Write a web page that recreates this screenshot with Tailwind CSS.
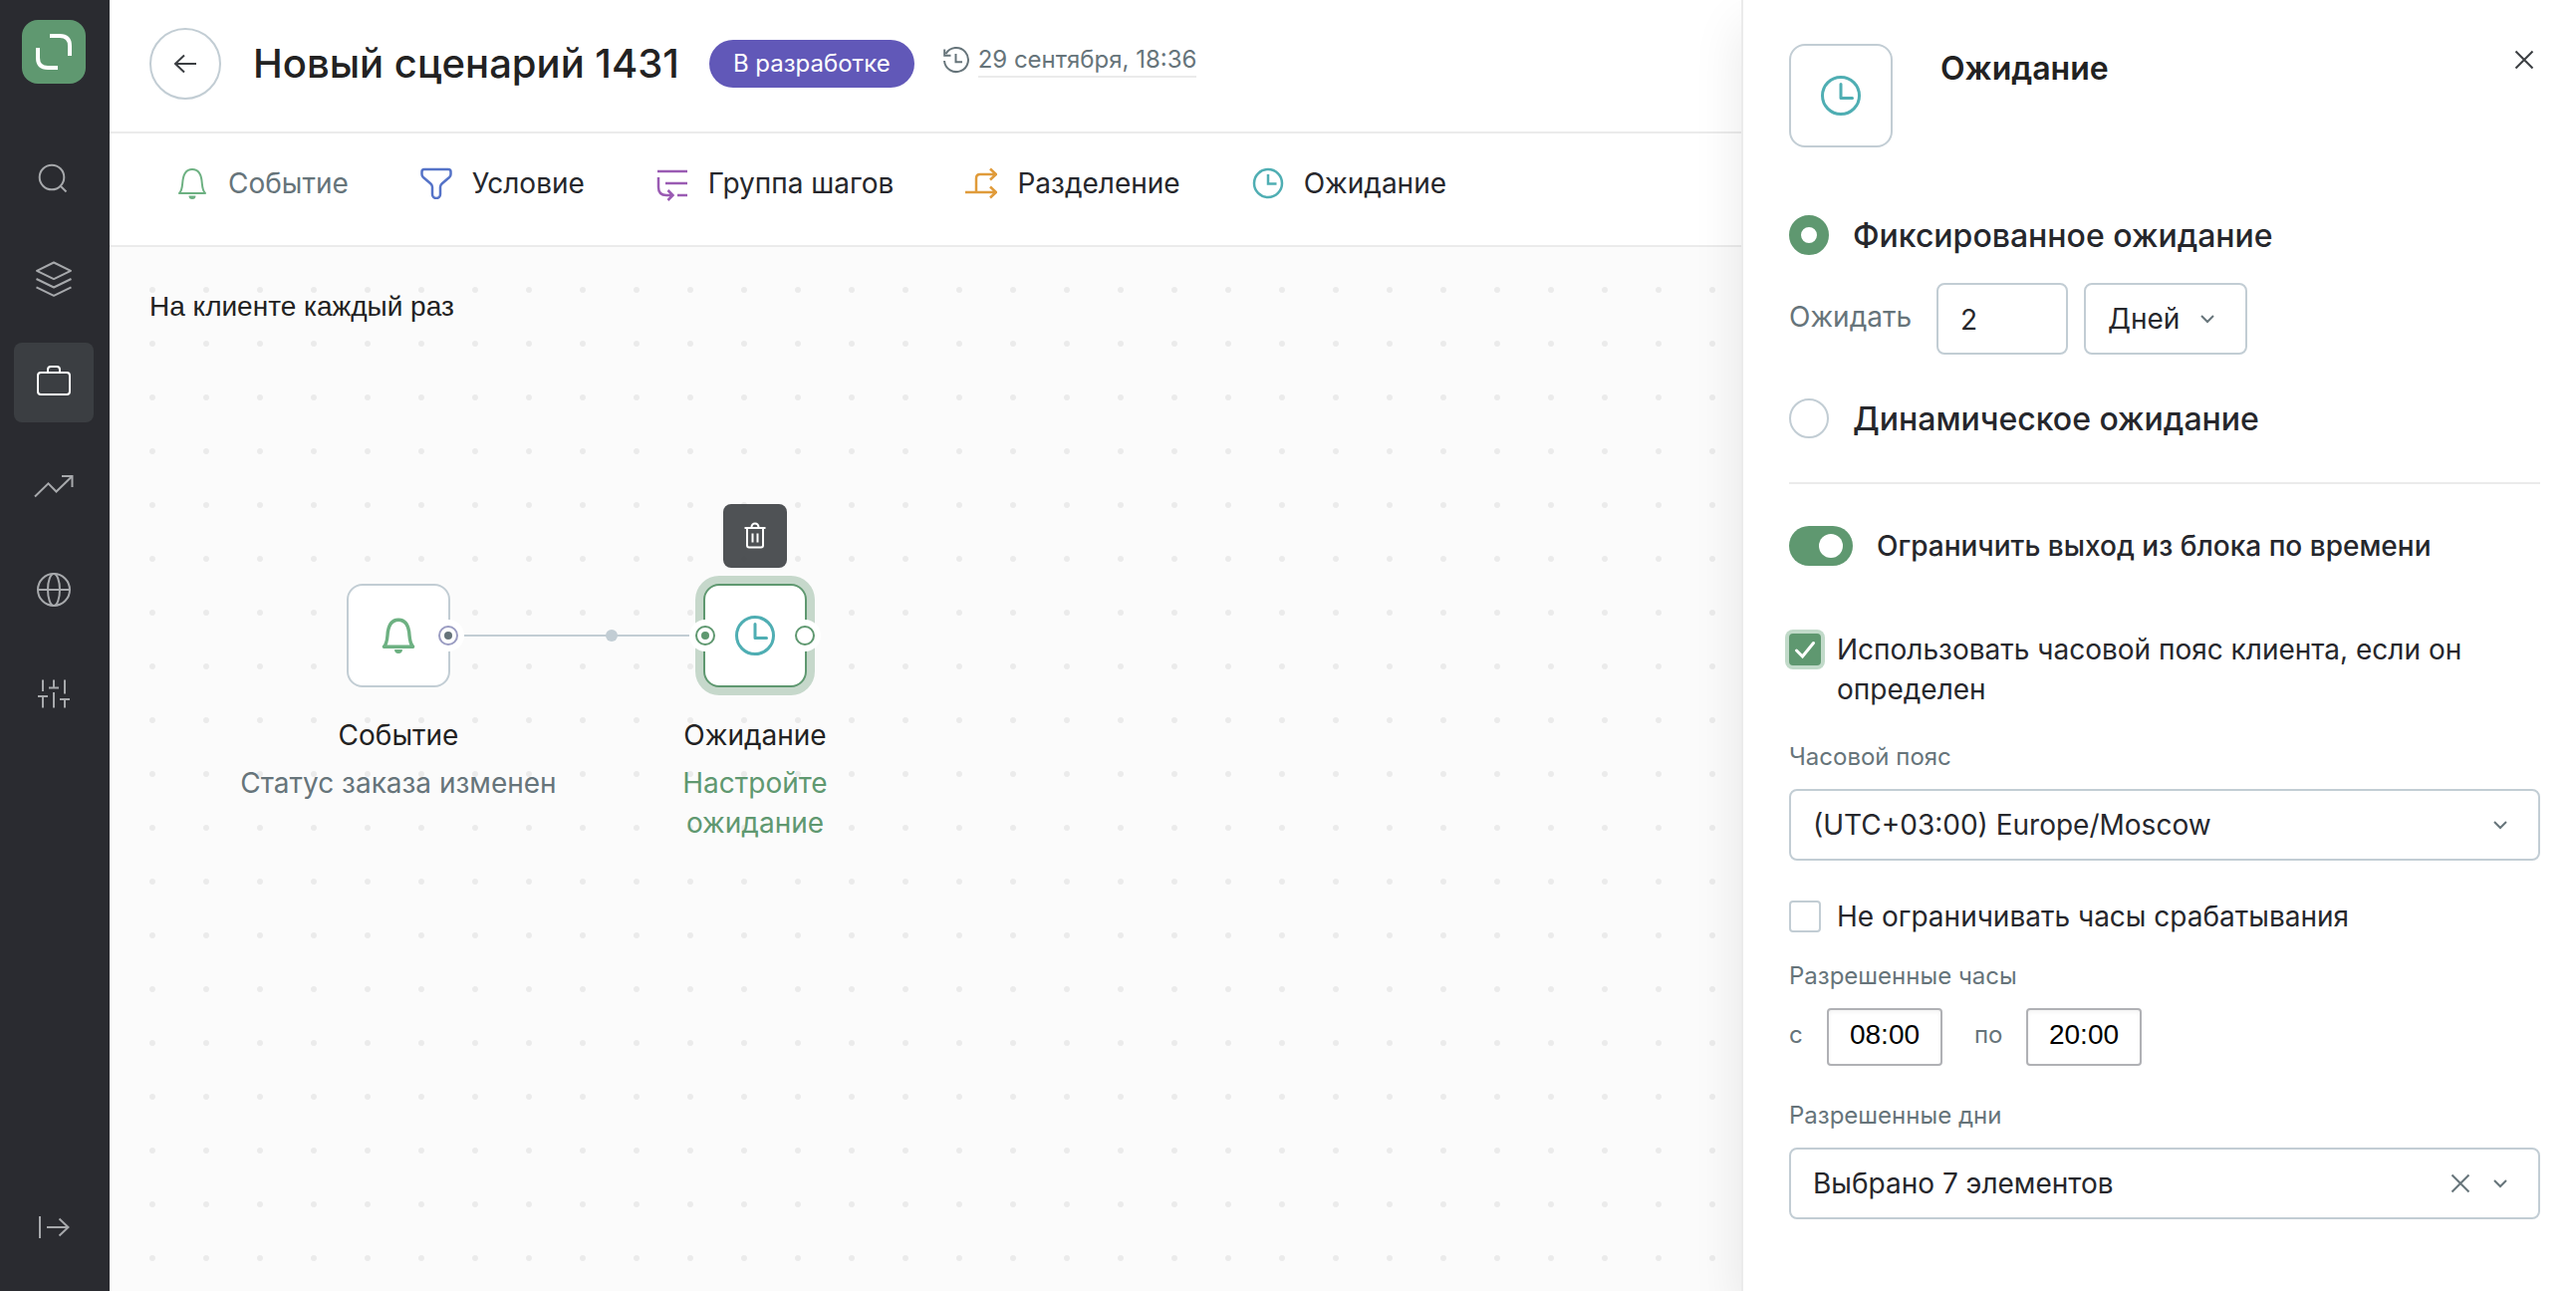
<!DOCTYPE html>
<html lang="ru">
<head>
<meta charset="utf-8">
<meta name="viewport" content="width=device-width, initial-scale=1">
<title>Новый сценарий 1431</title>
<script src="https://cdn.jsdelivr.net/npm/@tailwindcss/browser@4"></script>
</head>
<body class="bg-white font-['Inter',sans-serif] text-[28px] leading-10 text-[#26272c]">
<svg class="hidden" aria-hidden="true">
  <symbol id="bell" viewBox="0 0 32 32"><path d="M3 26h26c-2-2-2.800-5-3.200-10C25.200 6 22 2 16 2S6.800 6 6.200 16C5.800 21 5 24 3 26z" fill="none" stroke="currentColor" stroke-linejoin="round"/><path d="M12.500 28.500h7a3.500 3.500 0 0 1-7 0z" fill="currentColor"/></symbol>
  <symbol id="clock" viewBox="0 0 40 40"><circle cx="20" cy="20" r="18.500"/><path d="M20 8.500v14h11.500" stroke-linecap="round" stroke-linejoin="round"/></symbol>
  <symbol id="chevron" viewBox="0 0 16 16"><path d="M2 5l6 6 6-6" fill="none" stroke="currentColor" stroke-width="2"/></symbol>
  <symbol id="cross" viewBox="0 0 20 20"><path d="M1.500 1.500l17 17M18.500 1.500l-17 17" fill="none" stroke="currentColor" stroke-width="2"/></symbol>
</svg>
<div class="flex min-h-screen">

  <nav aria-label="Главное меню" class="flex w-[110px] shrink-0 flex-col bg-[#2a2b30] pt-5 pr-4 pb-6 pl-[14px] text-[#a7a9ac]">
    <a href="#" aria-label="Главная" class="mx-auto mb-[52px] block size-16 rounded-2xl bg-[#5f9870]">
      <svg class="size-16" viewBox="0 0 64 64" fill="none" stroke="#fff" stroke-width="4"><path d="M28 16h10q10 0 10 10v10M16 28v10q0 10 10 10h10"/></svg>
    </a>
    <div class="flex flex-col gap-6">
      <a href="#" aria-label="Поиск" class="flex size-20 items-center justify-center rounded-lg">
        <svg class="size-10" viewBox="0 0 40 40" fill="none" stroke="currentColor" stroke-width="2"><circle cx="18" cy="22" r="12.300"/><path d="M27 31l5.500 5.500"/></svg>
      </a>
      <a href="#" aria-label="Слои" class="flex size-20 items-center justify-center rounded-lg">
        <svg class="size-10" viewBox="0 0 40 40" fill="none" stroke="currentColor" stroke-width="2" stroke-linejoin="round"><path d="M20 3.500l17 8.300-17 8.300-17-8.300zM2.500 20L20 28.500 37.500 20M2.500 28.300L20 36.800l17.500-8.500"/></svg>
      </a>
      <a href="#" aria-label="Кампании" aria-current="page" class="flex size-20 items-center justify-center rounded-lg bg-[#3b3e42] text-white">
        <svg class="size-10" viewBox="0 0 40 40" fill="none" stroke="currentColor" stroke-width="2"><rect x="4" y="10" width="32" height="22" rx="3"/><path d="M14 10V7a3 3 0 0 1 3-3h6a3 3 0 0 1 3 3v3"/></svg>
      </a>
      <a href="#" aria-label="Отчёты" class="flex size-20 items-center justify-center rounded-lg">
        <svg class="size-10" viewBox="0 0 40 40" fill="none" stroke="currentColor" stroke-width="2"><path d="M1 30.500l13.500-13.200 8 8.200L38.500 10M28 10h10.500v11"/></svg>
      </a>
      <a href="#" aria-label="Интеграции" class="flex size-20 items-center justify-center rounded-lg">
        <svg class="size-10" viewBox="0 0 40 40" fill="none" stroke="currentColor" stroke-width="2"><circle cx="20" cy="20" r="16"/><ellipse cx="20" cy="20" rx="6" ry="16"/><path d="M4 20h32"/></svg>
      </a>
      <a href="#" aria-label="Настройки" class="flex size-20 items-center justify-center rounded-lg">
        <svg class="size-10" viewBox="0 0 40 40" fill="none" stroke="currentColor" stroke-width="2"><path d="M9 6.500V18M4 23h10M9 23v11.500M20 6.500v8M15 14.500h10M20 19v15.500M31 6.500v14M26 26h10M31 26v8.500"/></svg>
      </a>
    </div>
    <button type="button" aria-label="Развернуть меню" class="mt-auto flex size-20 items-center justify-center">
      <svg class="size-10" viewBox="0 0 40 40" fill="none" stroke="currentColor" stroke-width="2"><path d="M6 9v22M13 20h21M25.500 11.500L34.500 20l-9 8.500"/></svg>
    </button>
  </nav>

  <main class="flex min-w-0 flex-1 flex-col">
    <header class="flex items-center border-b-2 border-[#ebebeb] pt-7 pb-8 pl-10 whitespace-nowrap">
      <button type="button" aria-label="Назад" class="mr-8 flex size-[72px] items-center justify-center rounded-full border-2 border-[#c2cdd4]">
        <svg class="size-8" viewBox="0 0 32 32" fill="none" stroke="#3b3e42" stroke-width="2"><path d="M27 16H6M15 7.500L6 16l9 8.500"/></svg>
      </button>
      <h1 class="text-[40px] leading-[48px] font-medium text-[#222]">Новый сценарий 1431</h1>
      <span class="ml-[30px] rounded-full bg-[#6158b8] px-6 py-1 text-2xl leading-10 text-white">В разработке</span>
      <div class="ml-7 flex items-center gap-2 pb-2 text-2xl text-[#66747a]">
        <svg class="size-7" viewBox="0 0 28 28" fill="none" stroke="currentColor" stroke-width="2"><path d="M3.600 8A12 12 0 1 1 2 15M2.200 3.500v6.200H8.500M13.500 8v8.200H20"/></svg>
        <span class="border-b-2 border-[#ebebeb] pt-0.5">29 сентября, 18:36</span>
      </div>
    </header>

    <div role="toolbar" aria-label="Шаги сценария" class="flex items-center gap-[72px] border-b-2 border-[#ebebeb] pt-[30px] pb-[42px] pl-[67px] whitespace-nowrap">
      <button type="button" class="flex items-center gap-5 text-[#66747a]">
        <svg class="size-8 text-[#6db182]" stroke-width="2"><use href="#bell"/></svg>Событие
      </button>
      <button type="button" class="flex items-center gap-5">
        <svg class="size-8 text-[#5573c8]" viewBox="0 0 32 32" fill="none" stroke="currentColor" stroke-width="2.500"><path d="M4 2h24a2.500 2.500 0 0 1 2.500 2.500V7c0 1.200-.5 2.200-1.400 3l-7.300 6.200c-1.200 1-1.800 2-1.800 3.500V27a4 4 0 0 1-8 0v-7.300c0-1.500-.6-2.500-1.800-3.500L2.900 10C2 9.200 1.500 8.200 1.500 7V4.500A2.500 2.500 0 0 1 4 2z"/></svg>Условие
      </button>
      <button type="button" class="flex items-center gap-5">
        <svg class="size-8 overflow-visible text-[#9a5bb3]" viewBox="0 0 32 32" fill="none" stroke="currentColor" stroke-width="2.500"><path d="M1 4h30M9 16h22M21 28h10M2 10v10q0 8 8 8h6M11.500 23l5 5-5 5"/></svg>Группа шагов
      </button>
      <button type="button" class="flex items-center gap-5">
        <svg class="size-8 text-[#e09b3a]" viewBox="0 0 32 32" fill="none" stroke="currentColor" stroke-width="2.500"><path d="M0 25h31M25 19.500l6 5.500-6 5.500M11 25V11q0-4 4-4h16M25 1.500L31 7l-6 5.500"/></svg>Разделение
      </button>
      <button type="button" class="flex items-center gap-5">
        <svg class="size-8" viewBox="0 0 32 32" fill="none" stroke="#4faeb3" stroke-width="2.500"><circle cx="16" cy="16" r="14"/><path d="M16 7v9.500h8.500"/></svg>Ожидание
      </button>
    </div>

    <section aria-label="Схема сценария" class="relative flex-1 bg-[#fbfbfb] bg-[radial-gradient(circle,#ebebeb_2.500px,transparent_3.500px)] bg-size-[54px_54px] bg-position-[16px_16px]">
      <p class="pt-10 pl-10 font-['Liberation_Sans',sans-serif] text-[#222]">На клиенте каждый раз</p>

      <svg class="absolute top-[380px] left-[356px] h-5 w-[240px]" viewBox="0 0 240 20" fill="none" stroke="#c2cdd4" stroke-width="2"><path d="M0 10h240"/><circle cx="148" cy="10" r="6" fill="#c2cdd4" stroke="none"/></svg>

      <div class="absolute top-[338px] left-[120px] flex w-[340px] flex-col items-center text-center">
        <div class="relative flex size-[104px] items-center justify-center rounded-2xl border-2 border-[#c2cdd4] bg-white text-[#6db182]">
          <svg class="size-9" stroke-width="3"><use href="#bell"/></svg>
          <svg class="absolute top-[34px] -right-4 size-8" viewBox="0 0 32 32"><circle cx="16" cy="16" r="16" fill="#fff"/><circle cx="16" cy="16" r="9" fill="#fff" stroke="#9a9cc2" stroke-width="2"/><circle cx="16" cy="16" r="4" fill="#66747a"/></svg>
        </div>
        <h2 class="mt-7 mb-2 text-[#222]">Событие</h2>
        <p class="text-[#66747a]">Статус заказа изменен</p>
      </div>

      <button type="button" aria-label="Удалить шаг" class="absolute top-[258px] left-[616px] flex size-16 items-center justify-center rounded-lg bg-[#46494c]/95">
        <svg class="size-7" viewBox="0 0 28 28" fill="none" stroke="#fff" stroke-width="2"><path d="M3.500 6h21M6 6v17.500a2 2 0 0 0 2 2h12a2 2 0 0 0 2-2V6M10.500 6V5a3.500 3.500 0 0 1 7 0v1M11.500 11.500v9M16.500 11.500v9"/></svg>
      </button>
      <div class="absolute top-[338px] left-[548px] flex w-[200px] flex-col items-center text-center">
        <div class="relative flex size-[104px] items-center justify-center rounded-2xl border-2 border-[#5f9870] bg-white ring-8 ring-[#c6d8cb]">
          <svg class="size-10" fill="none" stroke="#4faeb3" stroke-width="3"><use href="#clock"/></svg>
          <svg class="absolute top-[34px] -left-4 size-8" viewBox="0 0 32 32"><circle cx="16" cy="16" r="16" fill="#fff"/><circle cx="16" cy="16" r="9" fill="#fff" stroke="#5f9870" stroke-width="2"/><circle cx="16" cy="16" r="4" fill="#5f9870"/></svg>
          <svg class="absolute top-[34px] -right-4 size-8" viewBox="0 0 32 32"><circle cx="16" cy="16" r="16" fill="#fff"/><circle cx="16" cy="16" r="9" fill="#fff" stroke="#5f9870" stroke-width="2"/></svg>
        </div>
        <h2 class="mt-7 mb-2 text-[#222]">Ожидание</h2>
        <p class="text-[#5f9870]">Настройте ожидание</p>
      </div>
    </section>
  </main>

  <aside aria-label="Настройка ожидания" class="relative w-[838px] shrink-0 border-l-2 border-[#ebebeb] bg-white pt-11 pr-9 pb-[72px] pl-[46px] shadow-[0_24px_48px_rgba(0,0,0,0.09)]">
    <div class="flex items-start">
      <div class="flex size-[104px] items-center justify-center rounded-2xl border-2 border-[#c2cdd4]">
        <svg class="size-10" fill="none" stroke="#4faeb3" stroke-width="3"><use href="#clock"/></svg>
      </div>
      <h2 class="mt-1 ml-12 flex-1 text-[32px] leading-[42px] font-semibold text-[#222]">Ожидание</h2>
      <button type="button" aria-label="Закрыть" class="flex size-8 items-center justify-center text-[#3b3e42]"><svg class="size-5"><use href="#cross"/></svg></button>
    </div>

    <label class="mt-[68px] flex h-10 items-center gap-6 text-[32px] font-medium">
      <input type="radio" name="mode" checked class="size-10 appearance-none rounded-full border-2 border-[#c2cdd4] checked:border-[12px] checked:border-[#5f9870]"><span class="pt-0.5">Фиксированное ожидание</span>
    </label>
    <div class="mt-7 flex items-center">
      <label for="amount" class="w-[148px] pb-1 text-[#66747a]">Ожидать</label>
      <input id="amount" type="text" value="2" class="h-[72px] w-[132px] rounded-lg border-2 border-[#c2cdd4] px-[22px] pt-0.5">
      <div class="relative ml-4">
        <select aria-label="Единица времени" class="h-[72px] w-[164px] appearance-none rounded-lg border-2 border-[#c2cdd4] px-[22px]"><option>Дней</option></select>
        <svg class="pointer-events-none absolute top-7 right-8 size-4 text-[#66747a]"><use href="#chevron"/></svg>
      </div>
    </div>
    <label class="mt-11 flex h-10 items-center gap-6 text-[32px] font-medium">
      <input type="radio" name="mode" class="size-10 appearance-none rounded-full border-2 border-[#c2cdd4] checked:border-[12px] checked:border-[#5f9870]"><span class="pt-0.5">Динамическое ожидание</span>
    </label>

    <hr class="mt-11 border-t-2 border-[#ebebeb]">

    <label class="mt-[42px] flex items-center gap-6 font-medium">
      <input type="checkbox" role="switch" checked class="flex h-10 w-16 appearance-none items-center rounded-full bg-[#c2cdd4] px-[10px] before:size-6 before:rounded-full before:bg-white checked:justify-end checked:bg-[#5f9870]">Ограничить выход из блока по времени
    </label>

    <label class="mt-16 flex items-start gap-4">
      <span class="relative mt-1 size-8 shrink-0">
        <input type="checkbox" checked class="peer block size-8 appearance-none rounded-sm border-2 border-[#c2cdd4] checked:border-[#5f9870] checked:bg-[#5f9870] checked:ring-4 checked:ring-[#c1dac9]">
        <svg class="pointer-events-none absolute inset-0 hidden size-8 peer-checked:block" viewBox="0 0 32 32" fill="none" stroke="#fff" stroke-width="3"><path d="M7.500 17l6 6L24.500 9.500" stroke-linecap="round"/></svg>
      </span>
      <span>Использовать часовой пояс клиента, если он определен</span>
    </label>

    <label for="tz" class="mt-8 block text-2xl text-[#66747a]">Часовой пояс</label>
    <div class="relative mt-4">
      <select id="tz" class="block h-[72px] w-full appearance-none rounded-lg border-2 border-[#c2cdd4] px-[22px]"><option>(UTC+03:00) Europe/Moscow</option></select>
      <svg class="pointer-events-none absolute top-7 right-8 size-4 text-[#66747a]"><use href="#chevron"/></svg>
    </div>

    <label class="mt-9 flex items-center gap-4">
      <input type="checkbox" class="size-8 appearance-none rounded-sm border-2 border-[#c2cdd4] checked:border-[#5f9870] checked:bg-[#5f9870]">Не ограничивать часы срабатывания
    </label>

    <fieldset class="mt-6">
      <legend class="text-2xl text-[#66747a]">Разрешенные часы</legend>
      <div class="mt-4 flex items-center text-2xl text-[#66747a]">
        <label for="from" class="w-[38px] pb-1">с</label>
        <input id="from" type="text" value="08:00" class="h-[58px] w-[116px] rounded-sm border-2 border-[#b0b1b5] pb-1 text-center font-['Liberation_Sans',sans-serif] text-[28px] text-black inset-shadow-sm">
        <label for="to" class="ml-8 w-[52px] pb-1">по</label>
        <input id="to" type="text" value="20:00" class="h-[58px] w-[116px] rounded-sm border-2 border-[#b0b1b5] pb-1 text-center font-['Liberation_Sans',sans-serif] text-[28px] text-black inset-shadow-sm">
      </div>
    </fieldset>

    <label for="days" class="mt-[34px] block text-2xl text-[#66747a]">Разрешенные дни</label>
    <div class="relative mt-4">
      <select id="days" class="block h-[72px] w-full appearance-none rounded-lg border-2 border-[#c2cdd4] px-[22px]"><option>Выбрано 7 элементов</option></select>
      <button type="button" aria-label="Очистить" class="absolute top-[26px] right-[70px] flex text-[#66747a]"><svg class="size-5"><use href="#cross"/></svg></button>
      <svg class="pointer-events-none absolute top-7 right-8 size-4 text-[#66747a]"><use href="#chevron"/></svg>
    </div>
  </aside>
</div>
</body>
</html>
